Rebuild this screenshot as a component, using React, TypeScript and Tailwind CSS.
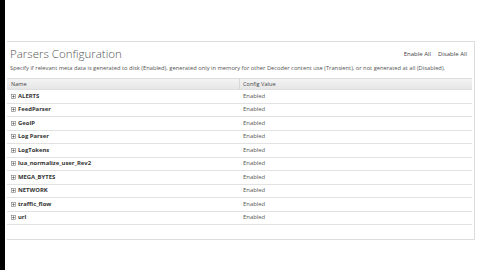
import React from "react";

const parsers = [
  "ALERTS",
  "FeedParser",
  "GeoIP",
  "Log Parser",
  "LogTokens",
  "lua_normalize_user_Rev2",
  "MEGA_BYTES",
  "NETWORK",
  "traffic_flow",
  "url",
];

function PlusBox() {
  return (
    <svg width="5" height="5" viewBox="0 0 5 5" className="mr-[2px] shrink-0">
      <rect x="0.5" y="0.5" width="4" height="4" fill="none" stroke="#777" strokeWidth="0.6" />
      <path d="M1.3 2.5H3.7M2.5 1.3V3.7" stroke="#555" strokeWidth="0.7" />
    </svg>
  );
}

export default function App() {
  return (
    <div className="w-[480px] h-[270px] bg-white flex overflow-hidden" style={{ fontFamily: '"Open Sans", "Liberation Sans", sans-serif' }}>
      <div className="w-[5px] h-full bg-black shrink-0" />
      <div className="flex-1 pt-[41px] pl-[2px] pr-[5px]">
        <div className="border border-[#dcdcdc] border-l-0 h-[199px] flex flex-col">
          <div className="flex items-start justify-between pl-[3px] pr-[7px] pt-[5px]">
            <h1 className="text-[11.5px] font-light text-[#555] leading-[14px]">Parsers Configuration</h1>
            <div className="flex gap-[7px] text-[6px] text-[#444] pt-[3px]">
              <span>Enable All</span>
              <span>Disable All</span>
            </div>
          </div>
          <p className="pl-[3px] mt-[3px] text-[5.75px] text-[#555] leading-[8px] whitespace-nowrap">
            Specify if relevant meta data is generated to disk (Enabled), generated only in memory for other Decoder content use (Transient), or not generated at all (Disabled).
          </p>
          <div className="mt-[6px] mr-[2px]">
            <div className="flex h-[12px] items-center bg-gradient-to-b from-[#f4f4f4] to-[#e6e6e6] border-y border-[#dedede] text-[5.6px] text-[#444]">
              <div className="w-[233px] pl-[4px] border-r border-[#d8d8d8] h-full flex items-center">Name</div>
              <div className="pl-[3px]">Config Value</div>
            </div>
            {parsers.map((p) => (
              <div key={p} className="flex h-[13.5px] items-center border-b border-[#e2e2e2] text-[5.9px] text-[#333]">
                <div className="w-[233px] pl-[4px] flex items-center font-bold">
                  <PlusBox />
                  {p}
                </div>
                <div className="pl-[3px] text-[#555]">Enabled</div>
              </div>
            ))}
          </div>
        </div>
      </div>
    </div>
  );
}
